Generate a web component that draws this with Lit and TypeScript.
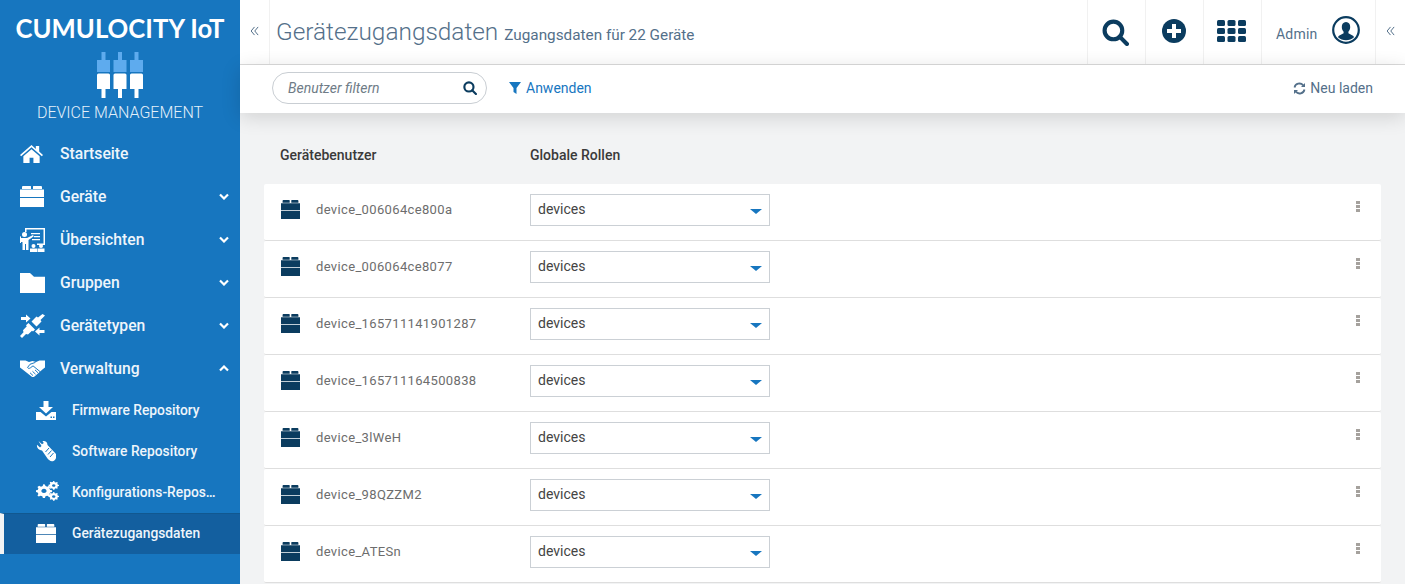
import { LitElement, html, css, svg } from 'lit';
import { customElement } from 'lit/decorators.js';

const brick = svg`<path d="M3 0h7.500a.5.5 0 0 1 .5.5V3H2V1a1 1 0 0 1 1-1zM13.500 0H21a1 1 0 0 1 1 1v2h-9V.5a.5.5 0 0 1 .5-.5zM0 3.500h24V11H0zM0 12h24v9H0z"/>`;

const icons: Record<string, unknown> = {
  home: svg`<path d="M12 1 0 11.500l1.200 1.300L12 3.500l10.800 9.300 1.200-1.300-4-3.500V2h-3.500v3.300z"/><path d="M12 5.500 3.500 12.800V20H10v-5.500h4V20h6.500v-7.200z"/>`,
  brick,
  board: svg`<path fill-rule="evenodd" d="M5 0h20v17h-8v-1.500h6.500V1.500h-17V4H5z"/><circle cx="4.500" cy="6.500" r="2.500"/><path d="M1 10h6l6-3 .8 1.300L8.500 12v10H6v-6H5v6H2.500v-8H1v1H0v-5a2 2 0 0 1 1-2zM11 5h9v1.200h-9zM14 8h6v1.200h-6zM12 11h8v1.200h-8z"/><circle cx="13.500" cy="18" r="2"/><circle cx="21" cy="18" r="2"/><path d="M10 20.500h7V24h-7zM17.500 20.500h7V24h-7z"/>`,
  folder: svg`<path d="M0 0h10l4 4h11v17H0z"/>`,
  plug: svg`<path d="M25 .5l-4.500 4.500 1 1.500-5 5-5-5 5-5 1.500 1L22.500-1z" transform="translate(0 1)"/><path d="M8.500 9l6.500 6.500-2 2-1-.8-4 3.700-2-.5L2 24l-2-2 3.500-3.800-.5-2 3.800-3.900-.8-1z"/><path d="M1 3h5V.5L10.500 4.500 6 8.500V6H1zM24.500 16h-5v-2.500L15 17.500l4.500 4V19h5z"/>`,
  shake: svg`<path d="M0 .5h5.500L9 2l3.500-1L16 2 19.500.5H25V8l-2 1.500-8.500 8c-1 .8-2.200.8-3 0L2 9.500 0 8z"/><path fill="none" stroke="#1776bf" stroke-width="1" d="M15.500 2.500 10 4.500 7.500 8c.5 1 2 1.200 3 .2l2.500-2 7.500 6.500M13 16.500l-3-3M15.500 15l-3-3M18 13.500l-3-3"/>`,
  download: svg`<path d="M7.500 0h5v6h4.500l-7 6.500L3 6h4.500z"/><path fill-rule="evenodd" d="M0 11h4.500L10 15.500 15.500 11H20v8H0zM14.500 15.500h1.500V17h-1.500zM17 15.500h1.500V17H17z"/>`,
  wrench: svg`<path d="M2.500 0 6 3.200 7.800 2 6.500.2C9-.5 11.500 1 11.500 4L20 13c1 2 0 6-2.500 7-3 1-4.500-1-6-2.500L6 9.500C3 9.500.5 7 1 3.800L4 6.500 5.500 5z"/><path fill="none" stroke="#1776bf" stroke-width="1" d="M13 7l-3.500 4M15.500 9.500l-3.500 4M17.500 12l-3.500 4"/>`,
  gears: svg`<path fill-rule="evenodd" d="M7.500 4l1.800.4.6 2 1.800.8 1.900-1 1.400 1.400-1 1.900.8 1.800 2 .6v2.100l-2 .6-.8 1.800 1 1.900-1.400 1.400-1.900-1-1.800.8-.6 2H7.200l-.6-2-1.800-.8-1.900 1-1.400-1.400 1-1.900-.8-1.800-2-.6v-2.100l2-.6.8-1.800-1-1.900L3.300 6.200l1.900 1L7 6.400zM8.300 10a2.700 2.700 0 1 0 .01 0z"/><path fill-rule="evenodd" d="M18 0l1.200.2.4 1.300 1.100.5 1.200-.6.9.9-.6 1.200.5 1.100 1.300.4v1.300l-1.300.4-.5 1.100.6 1.200-.9.900-1.200-.6-1.100.5-.4 1.300h-1.300l-.4-1.300-1.100-.5-1.200.6-.9-.9.600-1.200-.5-1.100-1.300-.4V4.700l1.300-.4.500-1.100-.6-1.200.9-.9 1.200.6 1.100-.5.400-1.300zM18.500 4a1.700 1.700 0 1 0 .01 0zM18 14l1.200.2.4 1.300 1.100.5 1.200-.6.9.9-.6 1.200.5 1.100 1.300.4v1.300l-1.300.4-.5 1.100.6 1.200-.9.900-1.200-.6-1.100.5-.4 1.300h-1.300l-.4-1.300-1.100-.5-1.200.6-.9-.9.600-1.200-.5-1.100-1.300-.4v-1.300l1.300-.4.500-1.100-.6-1.200.9-.9 1.200.6 1.100-.5.400-1.300zM18.500 18a1.700 1.700 0 1 0 .01 0z"/>`,
};

const icon = (name: string, w: number, h: number, vb: string) =>
  html`<svg width=${w} height=${h} viewBox=${vb} fill="currentColor" preserveAspectRatio="none">${icons[name]}</svg>`;

const doubleChevron = html`<svg class="collapse" width="9" height="10" viewBox="0 0 9 11" fill="none" stroke="currentColor" stroke-width="1.100">
  <path d="M4.500 1 .8 5.500l3.700 4.500M8.500 1 4.800 5.500l3.700 4.500" /></svg>`;

const magnifier = (size: number) => html`<svg width=${size} height=${size} viewBox="0 0 26 26" fill="none" stroke="currentColor">
  <circle cx="11" cy="11" r="8.500" stroke-width="4" /><path d="M17 17l7 7" stroke-width="4" stroke-linecap="round" /></svg>`;

const navItems = [
  { label: 'Startseite', icon: 'home', w: 23, h: 19, vb: '0 0 24 20' },
  { label: 'Geräte', icon: 'brick', w: 24, h: 21, vb: '0 0 24 21', chevron: 'down' },
  { label: 'Übersichten', icon: 'board', w: 25, h: 24, vb: '0 0 25 24', chevron: 'down' },
  { label: 'Gruppen', icon: 'folder', w: 25, h: 20, vb: '0 0 25 21', chevron: 'down' },
  { label: 'Gerätetypen', icon: 'plug', w: 25, h: 24, vb: '0 0 25 24', chevron: 'down' },
  { label: 'Verwaltung', icon: 'shake', w: 25, h: 17, vb: '0 0 25 18', chevron: 'up' },
];

const subItems = [
  { label: 'Firmware Repository', icon: 'download', w: 20, h: 19, vb: '0 0 20 19' },
  { label: 'Software Repository', icon: 'wrench', w: 20, h: 21, vb: '0 0 20 21' },
  { label: 'Konfigurations-Repos…', icon: 'gears', w: 23, h: 22, vb: '0 0 24 28' },
  { label: 'Gerätezugangsdaten', icon: 'brick', w: 20, h: 19, vb: '0 0 24 21', active: true },
];

const devices = [
  'device_006064ce800a',
  'device_006064ce8077',
  'device_165711141901287',
  'device_165711164500838',
  'device_3lWeH',
  'device_98QZZM2',
  'device_ATESn',
];

@customElement('app-root')
export class AppRoot extends LitElement {
  static styles = css`
    :host {
      display: flex;
      width: 1405px;
      height: 584px;
      overflow: hidden;
      font-family: Roboto, sans-serif;
      background: #f2f3f4;
      color: #444;
    }

    /* Sidebar */
    .sidebar {
      flex: 0 0 240px;
      background: #1776bf;
      color: #fff;
    }
    .brand {
      height: 132px;
      display: flex;
      flex-direction: column;
      align-items: center;
      box-sizing: border-box;
      padding-top: 12px;
    }
    .brand-name {
      font-family: Lato, sans-serif;
      font-weight: 700;
      font-size: 25.700px;
      line-height: 32px;
      white-space: nowrap;
    }
    .brand-logo {
      margin-top: 8px;
      display: block;
    }
    .brand-app {
      font-size: 16px;
      font-weight: 300;
      line-height: 20px;
      margin-top: 5px;
      color: #e3f0fa;
    }
    .nav-item {
      height: 43px;
      display: flex;
      align-items: center;
      padding-left: 20px;
      font-size: 15.700px;
      font-weight: 500;
      color: #eef5fb;
    }
    .nav-icon {
      flex: 0 0 40px;
      display: flex;
      color: #fff;
    }
    .nav-label {
      flex: 1;
    }
    .nav-chevron {
      margin-right: 11px;
      display: block;
    }
    .sub-item {
      height: 41px;
      display: flex;
      align-items: center;
      padding-left: 36px;
      padding-bottom: 1px;
      font-size: 13.800px;
      font-weight: 500;
      color: #eef5fb;
      box-sizing: border-box;
      white-space: nowrap;
    }
    .sub-item .nav-icon {
      flex: 0 0 36px;
    }
    .sub-item.active {
      background: #135f9f;
      border-left: 4px solid #f2f3f4;
      border-top: 1px solid #115890;
      padding-left: 32px;
      padding-bottom: 2px;
    }

    /* Main */
    .main {
      flex: 1;
      min-width: 0;
      display: flex;
      flex-direction: column;
    }
    .header {
      height: 65px;
      flex: none;
      box-sizing: border-box;
      background: #fff;
      border-bottom: 1px solid #dcdcdc;
      display: flex;
      align-items: stretch;
      color: #54708a;
    }
    .collapse-cell {
      flex: 0 0 30px;
      display: flex;
      align-items: center;
      justify-content: center;
      box-sizing: border-box;
      border-right: 1px solid #f1f1f1;
      padding-bottom: 3px;
    }
    .collapse-cell.end {
      border-right: 0;
      border-left: 1px solid #f1f1f1;
    }
    .title {
      flex: 1;
      display: flex;
      align-items: center;
      padding-left: 6px;
      color: #54708a;
      white-space: nowrap;
    }
    .title h1 {
      margin: 0 0 1px;
      font-size: 24.400px;
      font-weight: 300;
    }
    .title small {
      font-size: 15.300px;
      font-weight: 400;
      margin-left: 6px;
      margin-top: 5px;
    }
    .head-btn {
      flex: 0 0 58px;
      box-sizing: border-box;
      border-left: 1px solid #f1f1f1;
      display: flex;
      align-items: center;
      justify-content: center;
      padding-right: 2px;
      color: #0b3c5f;
    }
    .head-btn .raised {
      margin-bottom: 3px;
    }
    .user {
      flex: 0 0 114px;
      box-sizing: border-box;
      border-left: 1px solid #f1f1f1;
      display: flex;
      align-items: center;
      justify-content: space-between;
      padding: 0 15px 0 14px;
      font-size: 14px;
      color: #54708a;
      letter-spacing: 0.2px;
    }
    .user span {
      margin-top: 3px;
    }
    .user svg {
      color: #0b3c5f;
      margin-bottom: 4px;
    }

    .actions {
      height: 48px;
      flex: none;
      box-sizing: border-box;
      background: #fff;
      display: flex;
      align-items: center;
      padding: 0 32px 2px;
      box-shadow: 0 4px 20px rgba(0, 0, 0, 0.14);
      position: relative;
      font-size: 14px;
    }
    .filter {
      width: 215px;
      height: 32px;
      box-sizing: border-box;
      border: 1px solid #c9ced3;
      border-radius: 16px;
      display: flex;
      align-items: center;
      justify-content: space-between;
      padding: 0 9px 0 15px;
      color: #0b3c5f;
      font-style: italic;
    }
    .filter span {
      color: #6f7c87;
    }
    .apply {
      margin-left: 22px;
      display: flex;
      align-items: center;
      gap: 5px;
      color: #1776bf;
      margin-top: -1px;
    }
    .reload {
      margin-left: auto;
      display: flex;
      align-items: center;
      gap: 4px;
      color: #54708a;
    }

    /* Table */
    .content {
      flex: 1;
      padding: 0 24px;
    }
    .table-head,
    .row {
      display: grid;
      grid-template-columns: 266px 240px 1fr;
    }
    .table-head {
      height: 71px;
      align-items: center;
      font-size: 14px;
      font-weight: 500;
      color: #3a3a3a;
      box-sizing: border-box;
      padding-top: 13px;
    }
    .table-head div:first-child {
      padding-left: 16px;
    }
    .row {
      height: 57px;
      box-sizing: border-box;
      background: #fff;
      border-bottom: 1px solid #dedede;
      padding-top: 10px;
      border-radius: 2px;
      font-size: 14px;
    }
    .device {
      display: flex;
      align-items: center;
      height: 30px;
      padding-left: 17px;
      gap: 16px;
      color: #6d6d6d;
      font-size: 13px;
      letter-spacing: 0.35px;
    }
    .device svg {
      color: #0b3c5f;
    }
    .select {
      height: 32px;
      box-sizing: border-box;
      border: 1px solid #cbd0d5;
      display: flex;
      align-items: center;
      justify-content: space-between;
      padding: 0 7px 2px 7px;
      color: #444;
    }
    .caret {
      width: 0;
      height: 0;
      border-left: 6px solid transparent;
      border-right: 6px solid transparent;
      border-top: 5px solid #1776bf;
      margin-top: 5px;
    }
    .kebab {
      justify-self: end;
      margin-right: 21px;
      margin-top: 7px;
      display: flex;
      flex-direction: column;
      gap: 1.500px;
    }
    .kebab i {
      width: 4px;
      height: 2.500px;
      background: #a5a19d;
    }
  `;

  render() {
    return html`
      <aside class="sidebar">
        <div class="brand">
          <div class="brand-name">CUMULOCITY IoT</div>
          <svg class="brand-logo" width="46" height="46" viewBox="0 0 46 46">
            ${[0, 16.5, 33].map(
              (x) => svg`
                <path fill="#5eabee" d="M${x + 4.5} 0h4v8h4.500v12H${x}V8h4.500z" />
                <path fill="#fff" d="M${x} 23a1.500 1.500 0 0 1 1.500-1.500h10a1.500 1.500 0 0 1 1.500 1.500v14H${x + 8.5}v9h-4v-9H${x}z" />
              `
            )}
          </svg>
          <div class="brand-app">DEVICE MANAGEMENT</div>
        </div>
        ${navItems.map(
          (item) => html`
            <div class="nav-item">
              <span class="nav-icon">${icon(item.icon, item.w, item.h, item.vb)}</span>
              <span class="nav-label">${item.label}</span>
              ${item.chevron
                ? html`<svg class="nav-chevron" width="10" height="7" viewBox="0 0 10 7" fill="none" stroke="#fff" stroke-width="2.200">
                    <path d=${item.chevron === 'down' ? 'M1 1.500l4 4 4-4' : 'M1 5.500l4-4 4 4'} />
                  </svg>`
                : ''}
            </div>
          `
        )}
        ${subItems.map(
          (item) => html`
            <div class="sub-item ${item.active ? 'active' : ''}">
              <span class="nav-icon">${icon(item.icon, item.w, item.h, item.vb)}</span>
              <span>${item.label}</span>
            </div>
          `
        )}
      </aside>

      <div class="main">
        <header class="header">
          <div class="collapse-cell">${doubleChevron}</div>
          <div class="title">
            <h1>Gerätezugangsdaten</h1>
            <small>Zugangsdaten für 22 Geräte</small>
          </div>
          <div class="head-btn">${magnifier(27)}</div>
          <div class="head-btn">
            <svg class="raised" width="24" height="24" viewBox="0 0 24 24">
              <circle cx="12" cy="12" r="12" fill="currentColor" />
              <path d="M10 5h4v5h5v4h-5v5h-4v-5H5v-4h5z" fill="#fff" />
            </svg>
          </div>
          <div class="head-btn">
            <svg class="raised" width="29" height="22" viewBox="0 0 29 22" fill="currentColor">
              ${[0, 10.5, 21].map((x) =>
                [0, 8, 16].map((y) => svg`<rect x=${x} y=${y} width="8" height="6" rx="1.500" />`)
              )}
            </svg>
          </div>
          <div class="user">
            <span>Admin</span>
            <svg width="28" height="28" viewBox="0 0 28 28">
              <circle cx="14" cy="14" r="12.800" fill="none" stroke="currentColor" stroke-width="2.200" />
              <path fill="currentColor" d="M14 6c2.800 0 4.300 2.200 4.200 5 0 2-.8 3.700-1.800 4.700v1.600l4.600 2.400c.6.4 1 1 1 1.500-2 2-5 3-8 3s-6-1-8-3c0-.5.4-1.100 1-1.500l4.600-2.400v-1.600c-1-1-1.800-2.700-1.800-4.700C9.700 8.200 11.200 6 14 6z" />
            </svg>
          </div>
          <div class="collapse-cell end">${doubleChevron}</div>
        </header>

        <div class="actions">
          <div class="filter">
            <span>Benutzer filtern</span>
            ${magnifier(14)}
          </div>
          <div class="apply">
            <svg width="12" height="12" viewBox="0 0 12 12" fill="currentColor"><path d="M0 0h12L7.500 6v6L4.500 10V6z" /></svg>
            <span>Anwenden</span>
          </div>
          <div class="reload">
            <svg width="13" height="13" viewBox="0 0 13 13" fill="none" stroke="currentColor" stroke-width="1.800">
              <path d="M1.500 5.500A5 5 0 0 1 10.200 3.300" />
              <path d="M11.500 7.500A5 5 0 0 1 2.800 9.700" />
              <path d="M12 1v4H8zM1 12V8h4z" fill="currentColor" stroke="none" />
            </svg>
            <span>Neu laden</span>
          </div>
        </div>

        <div class="content">
          <div class="table-head">
            <div>Gerätebenutzer</div>
            <div>Globale Rollen</div>
          </div>
          ${devices.map(
            (name) => html`
              <div class="row">
                <div class="device">
                  ${icon('brick', 19, 19, '0 0 24 21')}
                  <span>${name}</span>
                </div>
                <div class="select">
                  <span>devices</span>
                  <span class="caret"></span>
                </div>
                <div class="kebab"><i></i><i></i><i></i></div>
              </div>
            `
          )}
        </div>
      </div>
    `;
  }
}
